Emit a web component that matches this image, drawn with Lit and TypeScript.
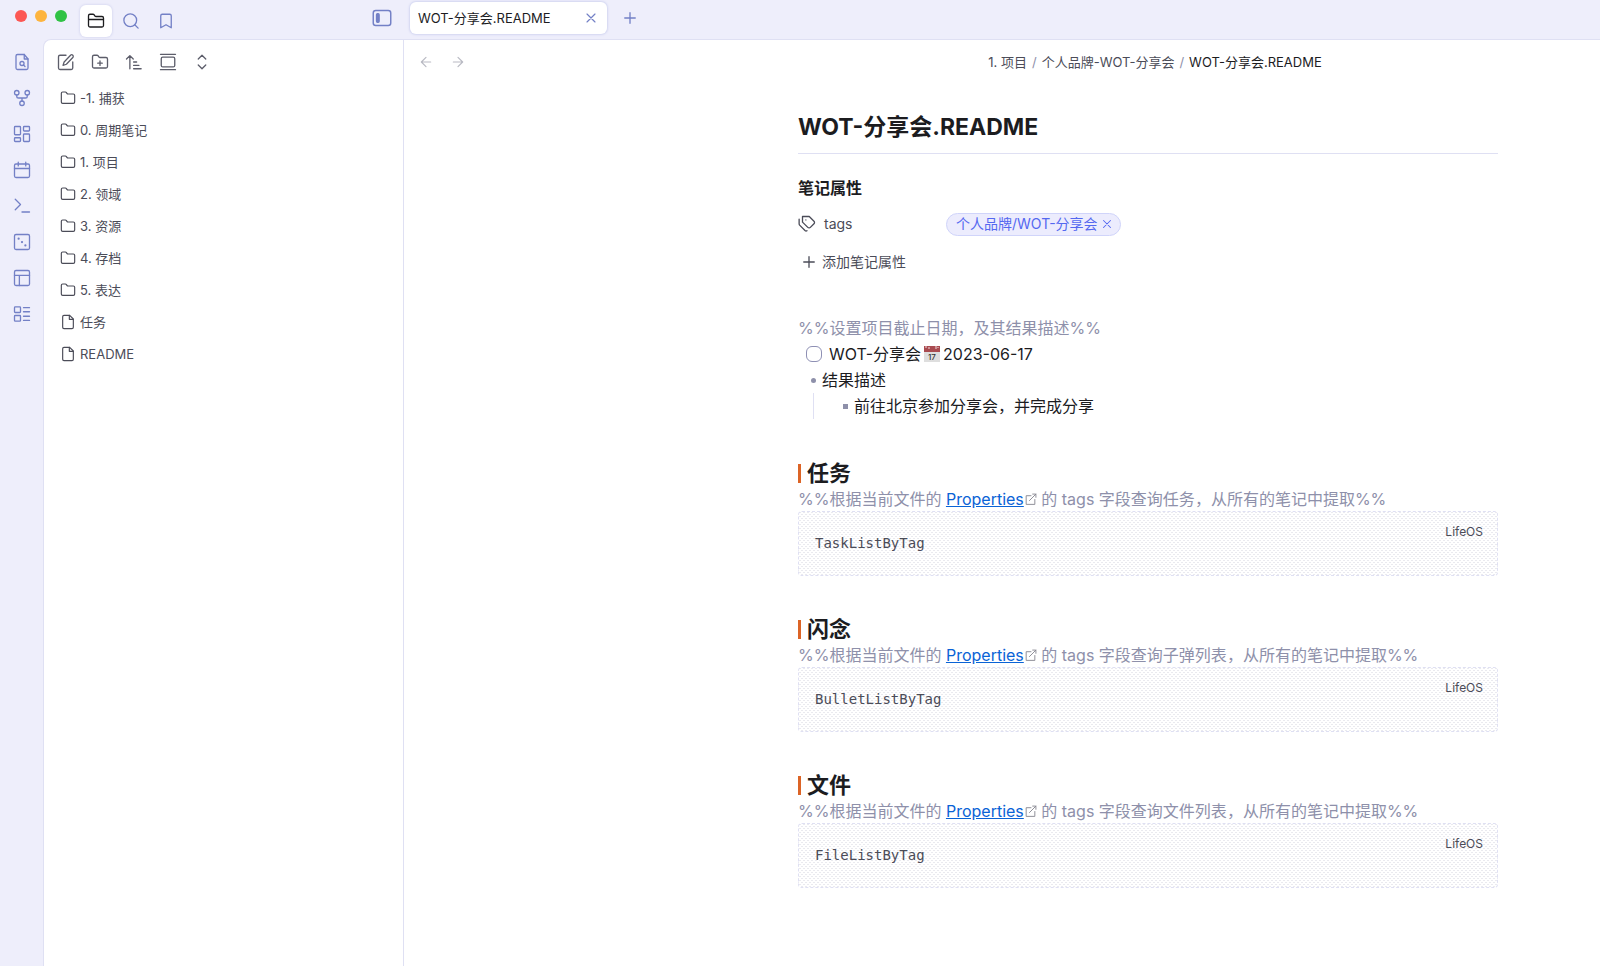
import { LitElement, html, css, svg } from "lit";
import { customElement, property } from "lit/decorators.js";

const ICONS: Record<string, unknown> = {
  folderOpen: svg`<path d="M2 10h20M4 20h16a2 2 0 0 0 2-2V8a2 2 0 0 0-2-2h-7.9a2 2 0 0 1-1.7-.9L9.6 3.900A2 2 0 0 0 7.900 3H4a2 2 0 0 0-2 2v13a2 2 0 0 0 2 2Z"/>`,
  search: svg`<circle cx="11" cy="11" r="8.500"/><path d="m21.500 21.500-4.500-4.500"/>`,
  bookmark: svg`<path d="m19 21-7-4-7 4V5a2 2 0 0 1 2-2h10a2 2 0 0 1 2 2Z"/>`,
  sidebar: svg`<rect x="1.500" y="3" width="21" height="18" rx="3"/><rect x="5.500" y="7" width="3" height="10" rx="1" fill="currentColor"/>`,
  close: svg`<path d="M18 6 6 18M6 6l12 12"/>`,
  plus: svg`<path d="M5 12h14M12 5v14"/>`,
  fileSearch: svg`<path d="M20 8v12a2 2 0 0 1-2 2H6a2 2 0 0 1-2-2V4a2 2 0 0 1 2-2h9Z"/><path d="M15 2v6h5"/><circle cx="12" cy="14" r="2.700"/><path d="m14 16 2 2"/>`,
  fork: svg`<circle cx="12" cy="19" r="3"/><circle cx="5" cy="5" r="3"/><circle cx="19" cy="5" r="3"/><path d="M19 8v1.500a2.500 2.500 0 0 1-2.500 2.500h-9A2.500 2.500 0 0 1 5 9.500V8M12 12v4"/>`,
  dashboard: svg`<rect x="2" y="2" width="8" height="11" rx="1"/><rect x="14" y="2" width="8" height="6" rx="1"/><rect x="14" y="12" width="8" height="10" rx="1"/><rect x="2" y="17" width="8" height="5" rx="1"/>`,
  calendar: svg`<rect x="2" y="4" width="20" height="18" rx="2"/><path d="M17 1.500v5M7 1.500v5M2 10h20"/>`,
  terminal: svg`<path d="m3 17 7-7-7-7M12 20h10"/>`,
  dice: svg`<rect x="2" y="2" width="20" height="20" rx="2"/><path d="M7.500 7.500h.01M12 12h.01M16.500 16.500h.01" stroke-width="3"/>`,
  layout: svg`<rect x="2" y="2" width="20" height="20" rx="2"/><path d="M2 8.500h20M8.500 22V8.500"/>`,
  listTree: svg`<rect x="2" y="2.500" width="8" height="7.500" rx="1"/><rect x="2" y="14" width="8" height="7.500" rx="1"/><path d="M14 3.500h8M14 9h8M14 15h8M14 20.500h8"/>`,
  edit: svg`<path d="M12 3H4a2 2 0 0 0-2 2v15a2 2 0 0 0 2 2h15a2 2 0 0 0 2-2v-8"/><path d="M18.400 2.600a2.200 2.200 0 0 1 3 3L12.500 15 8 16.500 9.500 12Z"/>`,
  folderPlus: svg`<path d="M12 10.500v6M9 13.500h6M4 20h16a2 2 0 0 0 2-2V8a2 2 0 0 0-2-2h-7.900a2 2 0 0 1-1.700-.9L9.600 3.900A2 2 0 0 0 7.900 3H4a2 2 0 0 0-2 2v13a2 2 0 0 0 2 2Z"/>`,
  sort: svg`<path d="m2 8 4.500-4.500L11 8M6.500 4v17M11.500 12h4M11.500 16.500h7M11.500 21h10"/>`,
  gallery: svg`<rect x="3" y="5.500" width="18" height="13" rx="2"/><path d="M2 1.800h20M2 22.200h20"/>`,
  chevrons: svg`<path d="m7 16 5 5 5-5M7 8l5-5 5 5"/>`,
  folder: svg`<path d="M4 20h16a2 2 0 0 0 2-2V8a2 2 0 0 0-2-2h-7.900a2 2 0 0 1-1.700-.9L9.600 3.900A2 2 0 0 0 7.900 3H4a2 2 0 0 0-2 2v13a2 2 0 0 0 2 2Z"/>`,
  file: svg`<path d="M14.500 2H6a2 2 0 0 0-2 2v16a2 2 0 0 0 2 2h12a2 2 0 0 0 2-2V7.500Z"/><path d="M14 2v6h6"/>`,
  left: svg`<path d="m12 19-7-7 7-7M19 12H5"/>`,
  right: svg`<path d="M5 12h14M12 5l7 7-7 7"/>`,
  tags: svg`<path d="M6 2h9l6.300 6.300a2.400 2.400 0 0 1 0 3.400L16.500 16.500a2.400 2.400 0 0 1-3.400 0L6 9.500Z"/><path d="M1.500 5.500v6c0 .9.300 1.600 1 2.300l6.800 6.800a2.400 2.400 0 0 0 2.700.4M10.500 6.500h.01"/>`,
  external: svg`<path d="M13 5H4v16h16v-9M16 2h6v6M22 2 10 14"/>`,
};

@customElement("ui-icon")
class UiIcon extends LitElement {
  static styles = css`
    :host { display: inline-flex; flex: none; width: 18px; height: 18px; }
    .glyph { width: 100%; height: 100%; fill: none; stroke: currentColor; stroke-width: 1.75; stroke-linecap: round; stroke-linejoin: round; }
  `;
  @property() name = "";
  render() {
    return html`<svg class="glyph" viewBox="0 0 24 24" aria-hidden="true">${ICONS[this.name]}</svg>`;
  }
}

const TREE = [
  ["folder", "-1. 捕获"],
  ["folder", "0. 周期笔记"],
  ["folder", "1. 项目"],
  ["folder", "2. 领域"],
  ["folder", "3. 资源"],
  ["folder", "4. 存档"],
  ["folder", "5. 表达"],
  ["file", "任务"],
  ["file", "README"],
];

const RIBBON = [
  ["fileSearch", "快速切换"],
  ["fork", "关系图谱"],
  ["dashboard", "白板"],
  ["calendar", "日记"],
  ["terminal", "命令面板"],
  ["dice", "随机笔记"],
  ["layout", "工作区"],
  ["listTree", "LifeOS"],
];

const TOOLS = [
  ["edit", "新建笔记"],
  ["folderPlus", "新建文件夹"],
  ["sort", "排序"],
  ["gallery", "自动定位"],
  ["chevrons", "展开"],
];

const SECTIONS = [
  ["任务", "任务", "TaskListByTag"],
  ["闪念", "子弹列表", "BulletListByTag"],
  ["文件", "文件列表", "FileListByTag"],
];

@customElement("app-root")
class AppRoot extends LitElement {
  static styles = css`
    :host {
      display: flex; flex-direction: column; min-height: 100vh; background: #eeeefb; color: #1c1c1f;
      font: 16px/26px Inter, "Noto Sans CJK SC", sans-serif;
      --accent: #7380c6; --line: #dfe0f3; --muted: #4b4c58; --faint: #8e90aa;
    }
    * { box-sizing: border-box; }
    button { display: inline-flex; align-items: center; justify-content: center; padding: 0; border: 0; background: none; color: inherit; font: inherit; cursor: pointer; }
    h1, h2, h3, p, ul, pre { margin: 0; padding: 0; font-weight: inherit; }
    ul { list-style: none; }

    .titlebar { display: flex; height: 40px; flex: none; color: var(--accent); }
    .left { display: flex; width: 404px; flex: none; padding: 0 12px 0 15px; justify-content: space-between; }
    .group { display: flex; }
    .lights { display: flex; gap: 8px; padding: 10px 13px 0 0; }
    .light { width: 12px; height: 12px; border-radius: 50%; }
    .red { background: #fc5753; }
    .amber { background: #fdb43f; }
    .green { background: #30c245; }
    .view { width: 32px; height: 32px; margin: 5px 3px 0 0; border-radius: 6px; }
    .view.active { background: #fff; color: #1c1c1f; box-shadow: 0 0 2px 1px #dcddf3; }
    .toggle { height: 36px; }
    .toggle ui-icon { width: 20px; height: 20px; }
    .tabs { display: flex; padding-left: 6px; }
    .tab { display: flex; align-items: center; justify-content: space-between; width: 197px; height: 32px; margin-top: 2px; padding: 0 8px; border-radius: 6px; background: #fff; color: #1c1c1f; box-shadow: 0 0 2px 1px #d3d6f1; font-size: 13px; }
    .tab button { color: var(--accent); }
    .tab ui-icon { width: 16px; height: 16px; }
    .new { width: 46px; height: 36px; }

    .shell { display: flex; flex: 1; }
    .ribbon { display: flex; flex-direction: column; align-items: center; gap: 18px; width: 44px; flex: none; padding-top: 13px; color: var(--accent); }
    .ribbon button { height: 18px; }
    .panes { display: flex; flex: 1; min-width: 0; margin: -1px 0 0 -1px; border: solid var(--line); border-width: 1px 0 0 1px; border-radius: 8px 0 0 0; background: #fff; }
    .files { width: 360px; flex: none; padding-left: 13px; border-right: 1px solid var(--line); color: var(--muted); }
    .tools { display: flex; gap: 16px; padding: 13px 0 11px; color: #5c5d6a; }
    .tree { font-size: 13px; line-height: 20px; }
    .entry { display: flex; align-items: center; gap: 4px; width: 100%; height: 32px; justify-content: flex-start; padding-left: 3px; }
    .entry ui-icon { width: 16px; height: 16px; }

    .main { flex: 1; min-width: 0; }
    .row { display: grid; grid-template-columns: 394fr minmax(0, 700px) 102fr; }
    .bar { height: 44px; align-items: center; font-size: 13px; color: var(--muted); }
    .nav { display: flex; gap: 16px; padding-left: 14px; color: #b9bac3; }
    .nav ui-icon { width: 16px; height: 16px; }
    .crumbs { display: flex; justify-content: center; gap: 5px; padding-left: 14px; }
    .crumbs a { color: inherit; text-decoration: none; }
    .slash { color: var(--faint); }
    .here { color: #1c1c1f; }

    .note { grid-column: 2; padding-top: 24px; }
    .title { padding-bottom: 7px; border-bottom: 1px solid var(--line); font-size: 23px; line-height: 38px; font-weight: 700; }
    .props { margin-top: 21px; font-size: 14px; color: var(--muted); }
    .label { font-size: 16px; font-weight: 600; color: #1c1c1f; }
    .prop { display: grid; grid-template-columns: 148px 1fr; align-items: center; margin-top: 10px; }
    .key { display: flex; align-items: center; gap: 8px; }
    .pill { display: inline-flex; align-items: center; gap: 2px; height: 23px; padding: 0 6px 0 9px; border: 1px solid #d0d4fa; border-radius: 12px; background: #ececfd; color: #5468f0; }
    .pill ui-icon { width: 14px; height: 14px; }
    .add { gap: 4px; margin-top: 12px; padding-left: 2px; }
    .comment { color: var(--faint); white-space: nowrap; }
    .intro { margin-top: 36px; }
    .task { display: flex; align-items: center; gap: 7px; padding-left: 8px; }
    .check { appearance: none; width: 16px; height: 16px; margin: 0; border: 1px solid #8e90b4; border-radius: 6px; background: #fff; }
    .text { display: flex; align-items: center; gap: 3px; }
    .emoji { width: 16px; height: 16px; }
    .bullet { display: flex; align-items: center; gap: 6px; padding-left: 13px; }
    .dot { width: 5px; height: 5px; border-radius: 50%; background: var(--faint); }
    .nested { margin-left: 15px; padding-left: 16px; border-left: 1px solid var(--line); }
    .square { border-radius: 0; }

    .outline { display: grid; gap: 39px; margin-top: 40px; }
    .heading { display: flex; align-items: center; gap: 6px; font-size: 22px; line-height: 28px; font-weight: 600; }
    .mark { width: 3px; height: 19px; background: #dc6426; }
    .section .comment { line-height: 24px; }
    .comment a { color: #0a63d6; text-decoration: underline; }
    .comment ui-icon { width: 13px; height: 13px; color: #8a8a93; vertical-align: -1px; }
    .code {
      display: flex; justify-content: space-between; height: 65px; padding: 11px 14px 0 16px;
      border: 1px dashed var(--line); border-radius: 4px; color: var(--muted);
      background-color: #fff;
      background-image: conic-gradient(from 270deg at 2px 1px, #eaeaef 90deg, transparent 0), conic-gradient(from 270deg at 2px 1px, #eaeaef 90deg, transparent 0);
      background-size: 4px 4px;
      background-position: 0 0, 2px 2px;
    }
    .snippet { margin-top: 8px; font: 14px/24px "DejaVu Sans Mono", monospace; }
    .lang { font-size: 12px; line-height: 17px; }
  `;

  render() {
    return html`
      <header class="titlebar">
        <div class="left">
          <div class="group">
            <div class="lights"><span class="light red"></span><span class="light amber"></span><span class="light green"></span></div>
            <button class="view active" aria-label="文件列表"><ui-icon name="folderOpen"></ui-icon></button>
            <button class="view" aria-label="搜索"><ui-icon name="search"></ui-icon></button>
            <button class="view" aria-label="书签"><ui-icon name="bookmark"></ui-icon></button>
          </div>
          <button class="toggle" aria-label="折叠侧边栏"><ui-icon name="sidebar"></ui-icon></button>
        </div>
        <div class="tabs">
          <div class="tab"><span>WOT-分享会.README</span><button aria-label="关闭"><ui-icon name="close"></ui-icon></button></div>
          <button class="new" aria-label="新标签页"><ui-icon name="plus"></ui-icon></button>
        </div>
      </header>
      <div class="shell">
        <nav class="ribbon">${RIBBON.map(([icon, label]) => html`<button aria-label=${label}><ui-icon name=${icon}></ui-icon></button>`)}</nav>
        <div class="panes">
          <aside class="files">
            <div class="tools">${TOOLS.map(([icon, label]) => html`<button aria-label=${label}><ui-icon name=${icon}></ui-icon></button>`)}</div>
            <ul class="tree">${TREE.map(([icon, label]) => html`<li><button class="entry"><ui-icon name=${icon}></ui-icon>${label}</button></li>`)}</ul>
          </aside>
          <main class="main">
            <div class="row bar">
              <div class="nav"><button aria-label="后退"><ui-icon name="left"></ui-icon></button><button aria-label="前进"><ui-icon name="right"></ui-icon></button></div>
              <div class="crumbs"><a href="#">1. 项目</a><span class="slash">/</span><a href="#">个人品牌-WOT-分享会</a><span class="slash">/</span><span class="here">WOT-分享会.README</span></div>
            </div>
            <div class="row">
              <article class="note">
                <h1 class="title">WOT-分享会.README</h1>
                <div class="props">
                  <h3 class="label">笔记属性</h3>
                  <div class="prop">
                    <span class="key"><ui-icon name="tags"></ui-icon>tags</span>
                    <span class="group"><span class="pill">个人品牌/WOT-分享会<button aria-label="移除标签"><ui-icon name="close"></ui-icon></button></span></span>
                  </div>
                  <button class="add"><ui-icon name="plus"></ui-icon>添加笔记属性</button>
                </div>
                <p class="comment intro">%%设置项目截止日期，及其结果描述%%</p>
                <label class="task"><input class="check" type="checkbox" />
                  <span class="text">WOT-分享会
                    <svg class="emoji" viewBox="0 0 16 16" role="img" aria-label="日历">
                      <rect width="16" height="16" fill="#dedede" /><rect width="16" height="6" fill="#a94b50" />
                      <path d="M2 0v2M5 1v2M12 0v3M14 1v1" stroke="#f3dcdc" />
                      <text x="8" y="14" text-anchor="middle" font-size="8" font-weight="500" fill="#333">17</text>
                    </svg>2023-06-17</span></label>
                <div class="bullet"><span class="dot"></span>结果描述</div>
                <div class="nested"><div class="bullet"><span class="dot square"></span>前往北京参加分享会，并完成分享</div></div>
                <div class="outline">
                  ${SECTIONS.map(([name, target, code]) => html`
                    <section class="section">
                      <h2 class="heading"><span class="mark"></span>${name}</h2>
                      <p class="comment">%%根据当前文件的 <a href="#">Properties</a><ui-icon name="external"></ui-icon> 的 tags 字段查询${target}，从所有的笔记中提取%%</p>
                      <div class="code"><pre class="snippet">${code}</pre><span class="lang">LifeOS</span></div>
                    </section>`)}
                </div>
              </article>
            </div>
          </main>
        </div>
      </div>
    `;
  }
}
